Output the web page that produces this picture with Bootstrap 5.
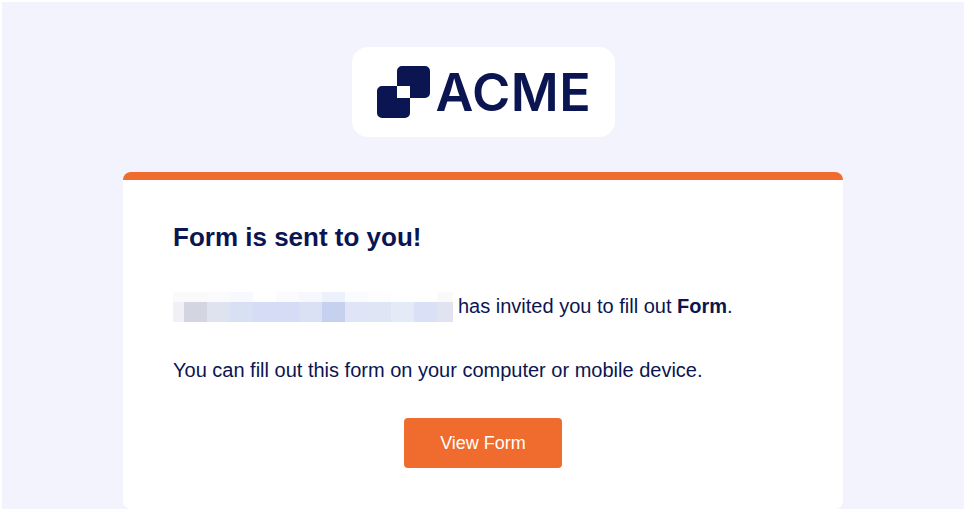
<!DOCTYPE html>
<html lang="en">
<head>
<meta charset="utf-8">
<title>Form is sent to you!</title>
<link href="https://cdn.jsdelivr.net/npm/bootstrap@5.3.0/dist/css/bootstrap.min.css" rel="stylesheet">
<style>
html, body { height: 509px; overflow: hidden; background: #fff; }
body { font-family: "Liberation Sans", Arial, sans-serif; color: #0b1551; }
.mail-bg { background: #f3f3fd; margin: 2px 2px 0 2px; height: 507px; overflow: hidden; padding-top: 45px; }
.logo-box { width: 263px; height: 90px; background: #fff; border-radius: 16px; gap: 6px; padding-left: 25px; }
.logo-text { font-family: Inter, sans-serif; font-weight: 600; font-size: 52px; line-height: 1; color: #0b1551; letter-spacing: .6px; padding-top: 2px; }
.mail-card { width: 720px; margin-top: 35px; background: #fff; border-top: 8px solid #ef6c2e; border-radius: 8px; padding: 42px 50px 0; height: 337px; }
.mail-title { font-size: 26px; font-weight: 700; line-height: 30px; margin: 0 0 40px; color: #0b1551; }
.mail-text { font-size: 20px; line-height: 24px; margin: 0 0 36px; color: #0b1551; }
.mail-text.first { display: flex; align-items: center; }
.mail-text.first span { margin-bottom: 2px; }
.blur-name { display: block; margin-right: 5px; }
.mail-btn { width: 158px; height: 50px; border-radius: 4px; background: #ef6c2e; border: 0; color: #fff; font-size: 18px; padding: 0; line-height: 50px; }
.mail-btn:hover { background: #ef6c2e; color: #fff; }
</style>
</head>
<body>
<div class="mail-bg">
  <div class="d-flex justify-content-center">
    <div class="logo-box d-flex align-items-center">
      <svg width="53" height="52" viewBox="0 0 53 52" aria-hidden="true">
        <path fill="#0b1551" d="M25 0H48a5 5 0 0 1 5 5V27a5 5 0 0 1-5 5H33V20H20V5a5 5 0 0 1 5-5z"/>
        <path fill="#0b1551" d="M5 20H20V32H33V47a5 5 0 0 1-5 5H5a5 5 0 0 1-5-5V25a5 5 0 0 1 5-5z"/>
      </svg>
      <span class="logo-text">ACME</span>
    </div>
  </div>
  <div class="mail-card mx-auto">
    <h1 class="mail-title">Form is sent to you!</h1>
    <p class="mail-text first">
      <svg class="blur-name" width="280" height="30" viewBox="173 292 280 30" aria-hidden="true" shape-rendering="crispEdges">
        <rect x="173" y="292" width="11" height="10" fill="#fafafa"/><rect x="184" y="292" width="23" height="10" fill="#fafafb"/><rect x="207" y="292" width="23" height="10" fill="#fbfbfe"/><rect x="230" y="292" width="23" height="10" fill="#f8f9fe"/><rect x="276" y="292" width="23" height="10" fill="#fbfbfe"/><rect x="299" y="292" width="23" height="10" fill="#f7f8fd"/><rect x="322" y="292" width="23" height="10" fill="#ecf1fb"/><rect x="345" y="292" width="23" height="10" fill="#fafbfe"/><rect x="368" y="292" width="23" height="10" fill="#fdfdff"/><rect x="437" y="292" width="16" height="10" fill="#fafafa"/>
        <rect x="173" y="302" width="11" height="20" fill="#f0f0f6"/><rect x="184" y="302" width="23" height="20" fill="#d3d5e1"/><rect x="207" y="302" width="23" height="20" fill="#dfe2ef"/><rect x="230" y="302" width="23" height="20" fill="#d8e0f3"/><rect x="253" y="302" width="46" height="20" fill="#d6dcf6"/><rect x="299" y="302" width="23" height="20" fill="#dbe1f5"/><rect x="322" y="302" width="23" height="20" fill="#c6d1f0"/><rect x="345" y="302" width="23" height="20" fill="#dfe4f6"/><rect x="368" y="302" width="23" height="20" fill="#e0e5f5"/><rect x="391" y="302" width="23" height="20" fill="#e5eaf7"/><rect x="414" y="302" width="23" height="20" fill="#dae0f5"/><rect x="437" y="302" width="16" height="20" fill="#e2e3f1"/>
      </svg>
      <span>has invited you to fill out <strong>Form</strong>.</span>
    </p>
    <p class="mail-text">You can fill out this form on your computer or mobile device.</p>
    <div class="text-center">
      <a class="btn mail-btn" href="#">View Form</a>
    </div>
  </div>
</div>
<script src="https://cdn.jsdelivr.net/npm/bootstrap@5.3.0/dist/js/bootstrap.bundle.min.js"></script>
</body>
</html>
